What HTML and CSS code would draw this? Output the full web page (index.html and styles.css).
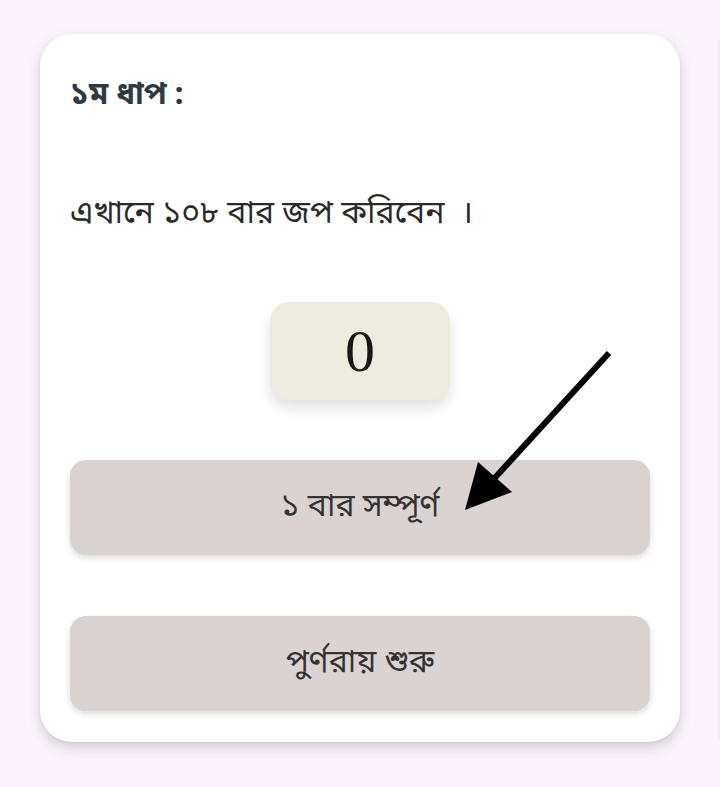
FILE: index.html
```html
<!DOCTYPE html>
<html lang="bn">
<head>
<meta charset="utf-8">
<link rel="stylesheet" href="styles.css">
</head>
<body>
<div class="page">
  <div class="card">
    <h2 class="title">১ম ধাপ :</h2>
    <p class="desc">এখানে ১০৮ বার জপ করিবেন &nbsp;।</p>
    <div class="counter-wrap"><div class="counter">0</div></div>
    <button class="btn btn-first">১ বার সম্পূর্ণ</button>
    <button class="btn btn-second">পুর্ণরায় শুরু</button>
  </div>
  <svg class="arrow" width="720" height="787" viewBox="0 0 720 787">
    <line x1="609" y1="353" x2="492" y2="481" stroke="#000" stroke-width="6"/>
    <polygon points="465,510 478,462 512,492" fill="#000"/>
  </svg>
  <div class="edge"></div>
</div>
</body>
</html>
```
FILE: styles.css
```css
html, body {
  margin: 0;
  padding: 0;
}
body {
  background: #fcf4fc;
  width: 720px;
  height: 787px;
  overflow: hidden;
  font-family: "Noto Sans Bengali", "Noto Sans", sans-serif;
}
.page {
  position: relative;
  width: 720px;
  height: 787px;
  padding: 34px 40px 0;
  box-sizing: border-box;
}
.card {
  background: #fff;
  border-radius: 32px;
  box-shadow: 0 6px 14px rgba(0,0,0,0.16), 0 1px 3px rgba(0,0,0,0.06);
  padding: 40px 30px 30px;
  display: flex;
  flex-direction: column;
  height: 708px;
  box-sizing: border-box;
}
.title {
  margin: 0;
  font-size: 31px;
  font-weight: 700;
  color: #2d3a44;
  line-height: 46px;
}
.desc {
  margin: 72px 0 0;
  font-size: 32px;
  font-weight: 400;
  color: #2a2a2a;
  line-height: 46px;
}
.counter-wrap {
  display: flex;
  justify-content: center;
  margin-top: 64px;
}
.counter {
  width: 180px;
  height: 98px;
  background: #edebdf;
  border-radius: 20px;
  box-shadow: 0 8px 14px rgba(0,0,0,0.12);
  display: flex;
  align-items: center;
  justify-content: center;
  font-family: "Liberation Serif", serif;
  font-size: 60px;
  color: #1c1616;
}
.btn {
  border: none;
  background: #dbd3d2;
  border-radius: 16px;
  height: 95px;
  width: 100%;
  font-family: "Noto Sans Bengali", "Noto Sans", sans-serif;
  font-size: 32px;
  color: #333;
  box-shadow: 0 3px 6px rgba(0,0,0,0.14);
  padding: 0;
}
.btn-first {
  margin-top: 60px;
}
.btn-second {
  margin-top: 61px;
}
.arrow {
  position: absolute;
  left: 0;
  top: 0;
  pointer-events: none;
}
.edge {
  position: absolute;
  right: 0;
  top: 40px;
  width: 3px;
  height: 700px;
  background: linear-gradient(to right, #fcf4fc, #f0eaf0);
}
```
